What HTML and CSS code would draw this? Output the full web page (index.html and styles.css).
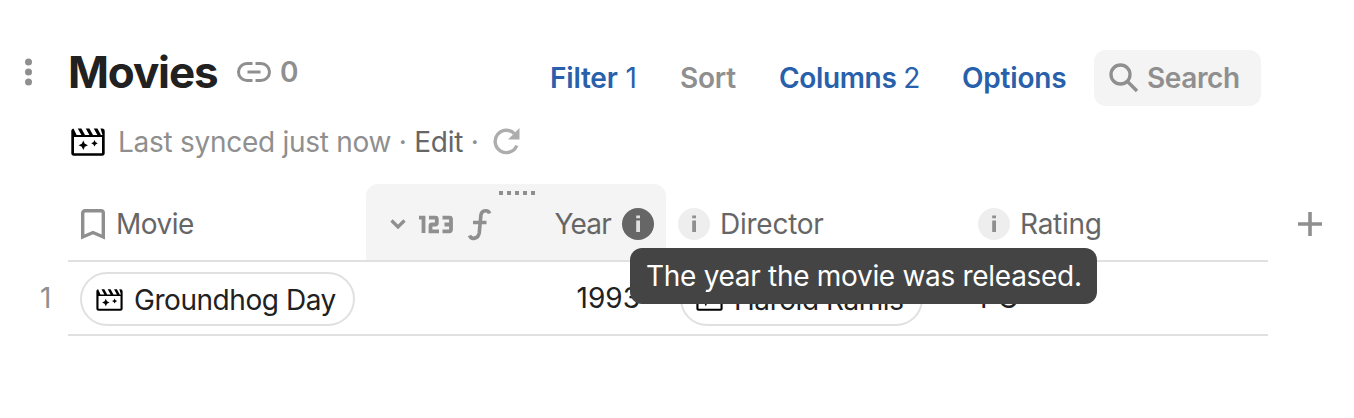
FILE: index.html
```html
<!DOCTYPE html>
<html lang="en">
<head>
<meta charset="utf-8">
<title>Movies</title>
<link rel="stylesheet" href="styles.css">
</head>
<body>
<svg width="0" height="0" class="defs">
  <symbol id="clapper" viewBox="0 0 34 28">
    <path fill="currentColor" d="M2.500 .4 5.600 7H10.400L6.800.4h3.600L14 7h4.400L14.800.4h3.600L22 7h4.400L22.800.4h3.600L30 7h1.500L29.500.4H31a2.700 2.700 0 0 1 2.700 2.700V25a2.700 2.700 0 0 1-2.700 2.700H3A2.700 2.700 0 0 1 .3 25V2.500A2.700 2.700 0 0 1 2.500 .4ZM3 9v16.200h28V9Z"/>
    <path fill="currentColor" d="m12.300 12.500 1.500 3.200 3.200 1.500-3.200 1.500-1.500 3.200-1.500-3.200-3.200-1.500 3.200-1.500ZM23.500 12l1.100 2.200 2.200 1.100-2.200 1.100-1.100 2.200-1.100-2.200-2.200-1.100 2.200-1.100Z"/>
  </symbol>
</svg>
<main class="page">
  <header class="top">
    <svg class="kebab" viewBox="0 0 8 28"><circle cx="4.500" cy="4" r="3.500"/><circle cx="4.500" cy="14" r="3.500"/><circle cx="4.500" cy="24" r="3.500"/></svg>
    <h1 class="title">Movies</h1>
    <svg class="link" viewBox="0 0 34 20"><path d="M15.500 1.500H10a8.500 8.500 0 0 0 0 17h5.500M18.500 1.500H24a8.500 8.500 0 0 1 0 17h-5.500M10.500 10h13"/></svg>
    <span class="link-count">0</span>
    <nav class="tools">
      <a class="tool filter">Filter <span class="count">1</span></a>
      <a class="tool sort">Sort</a>
      <a class="tool columns">Columns <span class="count">2</span></a>
      <a class="tool options">Options</a>
      <div class="search">
        <svg class="glass" viewBox="0 0 30 30"><circle cx="11.500" cy="11.500" r="9.500"/><path d="m18.500 18.500 9.500 9.500"/></svg>
        <span>Search</span>
      </div>
    </nav>
  </header>
  <section class="sync">
    <svg class="clapper"><use href="#clapper"/></svg>
    <span class="status">Last synced just now · <b class="edit">Edit</b> ·</span>
    <svg class="refresh" viewBox="0 0 28 28"><path class="arc" d="M24.800 17.500A11.200 11.200 0 1 1 22.400 5.600"/><path class="tip" d="M27.500 0v11.500H16Z"/></svg>
  </section>
  <section class="grid">
    <div class="head">
      <div class="cell movie">
        <svg class="bookmark" viewBox="0 0 24 30"><path d="M1.700 28V4a2.300 2.300 0 0 1 2.300-2.300h16A2.300 2.300 0 0 1 22.300 4v24L12 23.500Z"/></svg>
        <span>Movie</span>
      </div>
      <div class="cell year">
        <span class="grip"><i></i><i></i><i></i><i></i><i></i></span>
        <svg class="chevron" viewBox="0 0 16 10"><path d="m1.500 1.500 6.500 6.500 6.500-6.500"/></svg>
        <svg class="digits" viewBox="0 0 34 17" role="img" aria-label="Number"><path d="M0 1.700H4.500V17M10 1.700h6.300a1.500 1.500 0 0 1 1.500 1.500V7a1.500 1.500 0 0 1-1.500 1.500H13a1.500 1.500 0 0 0-1.500 1.500v5.300H20M23.500 1.700h7a1.500 1.500 0 0 1 1.500 1.500v10.600a1.500 1.500 0 0 1-1.500 1.500h-7M25.500 8.500H32"/></svg>
        <svg class="formula" viewBox="0 0 24 31"><path d="M21.500 4.500C20.500 .8 14 .5 12.900 6L11.300 23.500C10.500 30 3.500 31 1.500 26.500M5 13.500H18.500"/></svg>
        <span class="label">Year</span>
        <svg class="info dark" viewBox="0 0 32 32"><circle cx="16" cy="16" r="16"/><path d="M14.200 7.500h3.800v2.700h-3.800ZM14.200 12.500h3.800V24h-3.800Z"/></svg>
      </div>
      <div class="cell described">
        <svg class="info" viewBox="0 0 32 32"><circle cx="16" cy="16" r="16"/><path d="M14.200 7.500h3.800v2.700h-3.800ZM14.200 12.500h3.800V24h-3.800Z"/></svg>
        <span>Director</span>
      </div>
      <div class="cell described">
        <svg class="info" viewBox="0 0 32 32"><circle cx="16" cy="16" r="16"/><path d="M14.200 7.500h3.800v2.700h-3.800ZM14.200 12.500h3.800V24h-3.800Z"/></svg>
        <span>Rating</span>
      </div>
      <svg class="plus" viewBox="0 0 24 24"><path d="M0 12h24M12 0v24"/></svg>
    </div>
    <div class="row">
      <span class="index">1</span>
      <div class="cell movie"><span class="chip"><svg class="clapper small"><use href="#clapper"/></svg>Groundhog Day</span></div>
      <div class="cell value-year">1993</div>
      <div class="cell described"><span class="chip">
        <svg class="clapper small"><use href="#clapper"/></svg>Harold Ramis</span></div>
      <div class="cell rating">PG</div>
    </div>
    <div class="tooltip">The year the movie was released.</div>
  </section>
</main>
</body>
</html>
```

FILE: styles.css
```css
* { box-sizing: border-box; }
body { margin: 0; background: #fff; font: 400 28px/36px Inter, sans-serif; letter-spacing: -0.25px; color: #212121; }
svg { display: block; flex: none; overflow: visible; }
.defs { position: absolute; }
.page { width: 1354px; height: 418px; padding-top: 44px; overflow: hidden; }
.top { display: flex; align-items: center; height: 56px; padding-left: 24px; }
.kebab { width: 8px; height: 28px; fill: #8f8f8f; }
.title { width: 169px; margin: 0 0 0 36px; font-size: 44px; line-height: 56px; font-weight: 700; letter-spacing: -1.15px; white-space: nowrap; }
.link { width: 34px; height: 20px; fill: none; stroke: #8f8f8f; stroke-width: 3; }
.link-count { margin-left: 9px; color: #8f8f8f; font-weight: 600; }
.tools { display: flex; align-items: center; height: 56px; margin: 12px 93px 0 auto; font-weight: 600; letter-spacing: -0.2px; color: #2860ab; white-space: nowrap; }
.tool { display: block; }
.count { font-weight: 400; }
.filter { width: 130px; word-spacing: 1px; }
.sort { width: 99px; color: #8f8f8f; }
.columns { width: 183px; letter-spacing: -0.35px; }
.options { width: 132px; }
.search { display: flex; align-items: center; width: 167px; height: 56px; padding-left: 15px; gap: 8px; border-radius: 12px; background: #f4f4f4; color: #8f8f8f; letter-spacing: -0.4px; }
.glass { width: 30px; height: 30px; fill: none; stroke: #8f8f8f; stroke-width: 3.300; }
.sync { display: flex; align-items: center; height: 44px; margin-top: 20px; padding-left: 71px; color: #8f8f8f; }
.clapper { width: 34px; height: 28px; color: #000; }
.status { width: 374px; margin-left: 13px; letter-spacing: -0.27px; white-space: nowrap; }
.edit { font-weight: inherit; color: #666; }
.refresh { width: 28px; height: 28px; }
.arc { fill: none; stroke: #adadad; stroke-width: 3.400; }
.tip { fill: #adadad; }
.grid { position: relative; width: 1200px; margin: 20px 0 0 68px; }
.head, .row { position: relative; display: grid; grid-template-columns: 298px 300px 300px 302px; }
.head { height: 78px; border-bottom: 2px solid #e0e0e0; color: #666; }
.row { height: 74px; border-bottom: 2px solid #e0e0e0; }
.cell { display: flex; align-items: center; min-width: 0; padding: 4px 12px 0; white-space: nowrap; }
.movie { letter-spacing: -0.5px; }
.bookmark { width: 24px; height: 30px; margin: 0 11px 0 1px; fill: none; stroke: #8f8f8f; stroke-width: 3.400; }
.year { position: relative; padding-left: 24px; border-radius: 12px 12px 0 0; background: #f4f4f4; }
.grip { position: absolute; top: 7px; left: 133px; display: flex; gap: 4px; }
.grip i { width: 4px; height: 4px; background: #8f8f8f; }
.chevron { width: 16px; height: 10px; fill: none; stroke: #8f8f8f; stroke-width: 3.200; }
.digits { width: 34px; height: 17px; margin-left: 13px; fill: none; stroke: #8f8f8f; stroke-width: 3.800; }
.formula { width: 24px; height: 31px; margin-left: 15px; fill: none; stroke: #8f8f8f; stroke-width: 3.600; }
.label { margin-left: auto; letter-spacing: -0.8px; }
.info { width: 32px; height: 32px; margin-right: 10px; fill: #8f8f8f; }
.info circle { fill: #eee; }
.info.dark { margin: 0 0 0 11px; fill: #e0e0e0; }
.info.dark circle { fill: #666; }
.described { padding-left: 12px; }
.plus { position: absolute; left: 1230px; top: 28px; width: 24px; height: 24px; fill: none; stroke: #8f8f8f; stroke-width: 3.600; }
.index { position: absolute; left: -28px; top: 18px; color: #8f8f8f; }
.row .cell { padding-top: 2px; }
.chip { display: flex; align-items: center; height: 54px; padding: 2px 17px 0 14px; border: 2px solid #e0e0e0; border-radius: 27px; letter-spacing: -0.45px; }
.row .described { padding-left: 14px; }
.small { width: 27px; height: 22px; margin-right: 11px; }
.row .value-year { justify-content: flex-end; padding-right: 26px; padding-top: 0; letter-spacing: 0; }
.row .rating { padding: 0 14px; }
.tooltip { position: absolute; left: 562px; top: 64px; width: 467px; height: 56px; padding: 0 16px; border-radius: 12px; background: #444; color: #fff; line-height: 56px; letter-spacing: -0.3px; white-space: nowrap; }
```
